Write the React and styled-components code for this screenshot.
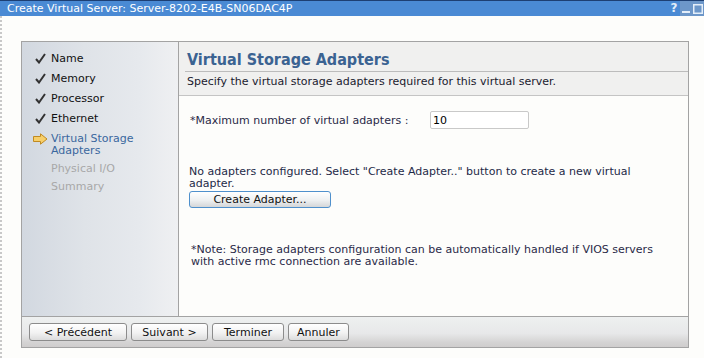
import React from 'react';
import styled, { createGlobalStyle } from 'styled-components';

const GlobalStyle = createGlobalStyle`
  html, body {
    margin: 0;
    padding: 0;
    background: #fdfdfb;
    font-family: 'DejaVu Sans', Verdana, sans-serif;
  }
`;

// Styles
const TitleBar = styled.div`
  height: 15px;
  border-top: 1px solid #1d3f73;
  background: #4a8ad4;
  color: #ffffff;
  font-size: 11px;
  line-height: 15px;
  padding-left: 7px;
  display: flex;
  justify-content: space-between;
  align-items: center;
`;

const TitleIcons = styled.div`
  display: flex;
  align-items: center;
  height: 15px;
`;

const TitleIcon = styled.span`
  width: ${(p) => p.$w || 11}px;
  height: 15px;
  display: flex;
  align-items: center;
  justify-content: center;
  color: #e4eef9;
  font-weight: bold;
  font-size: 12px;
  background: ${(p) => (p.$dark ? '#6d97c9' : 'transparent')};
`;

const Page = styled.div`
  border-left: 2px dotted #c8c8c8;
  padding: 25px 0 0 19px;
  height: 342px;
  box-sizing: border-box;
`;

const Wizard = styled.div`
  width: 668px;
  height: 307px;
  box-sizing: border-box;
  border: 1px solid #a3a3a3;
  display: flex;
  flex-direction: column;
`;

const Body = styled.div`
  flex: 1;
  display: flex;
`;

const Sidebar = styled.div`
  width: 156px;
  border-right: 1px solid #a3a3a3;
  background: linear-gradient(to right, #d2d8e0 0%, #dfe3e8 40%, #e6e9ed 75%, #eff0f2 100%);
  padding-top: 11px;
  display: flex;
  flex-direction: column;
`;

const Step = styled.div`
  display: flex;
  align-items: flex-start;
  font-size: 11px;
  line-height: 12px;
  margin-bottom: ${(p) => (p.$tight ? '6px' : '8px')};
  color: ${(p) => (p.$state === 'done' ? '#111111' : p.$state === 'current' ? '#3a679e' : '#a8a8a8')};
`;

const StepIcon = styled.span`
  width: 29px;
  flex-shrink: 0;
  display: flex;
  justify-content: center;
  padding-left: 7px;
  box-sizing: border-box;
`;

const Main = styled.div`
  flex: 1;
  display: flex;
  flex-direction: column;
  background: #fdfdfb;
`;

const Header = styled.div`
  background: #f0f0ef;
  border-bottom: 1px solid #c4c4c4;
  padding: 0 0 0 6px;
`;

const Heading = styled.h2`
  margin: 0;
  padding: 8px 0 2px 2px;
  font-family: 'DejaVu Sans Condensed', 'DejaVu Sans', sans-serif;
  font-stretch: condensed;
  font-size: 16px;
  line-height: 19px;
  font-weight: bold;
  color: #3b6392;
  border-bottom: 1px solid #bcbcbc;
`;

const Desc = styled.div`
  font-size: 11px;
  line-height: 13px;
  color: #1a1a2e;
  padding: 3px 0 7px 2px;
`;

const Content = styled.div`
  padding: 15px 0 0 10px;
  font-size: 11px;
  color: #2a2a48;
`;

const Field = styled.div`
  display: flex;
  align-items: center;
  padding-left: 1px;
`;

const Label = styled.span`
  width: 240px;
`;

const Input = styled.div`
  width: 99px;
  height: 18px;
  border: 1px solid #c9c9c9;
  border-radius: 2px;
  background: #ffffff;
  box-sizing: border-box;
  padding: 2px 0 0 2px;
  color: #000;
`;

const Message = styled.div`
  margin-top: 37px;
  line-height: 12px;
  width: 460px;
  color: #1e2a48;
`;

const CreateButton = styled.button`
  display: block;
  margin-top: 1px;
  width: 142px;
  height: 17px;
  border: 1px solid #4f90cc;
  border-radius: 3px;
  background: linear-gradient(to bottom, #ffffff 0%, #eef0f1 55%, #d4d6d8 100%);
  font-family: inherit;
  font-size: 11px;
  color: #111;
  padding: 0;
  line-height: 14px;
`;

const Note = styled.div`
  margin-top: 36px;
  padding-left: 2px;
  line-height: 12px;
  width: 480px;
`;

const Footer = styled.div`
  height: 31px;
  border-top: 1px solid #a3a3a3;
  background: linear-gradient(to bottom, #eef0f0 0%, #e7e8e9 55%, #d4d3d3 85%, #cfcdcd 100%);
  display: flex;
  align-items: flex-start;
  padding: 6px 0 0 7px;
  box-sizing: border-box;
  gap: 4px;
`;

const NavButton = styled.button`
  width: ${(p) => p.$w}px;
  height: 18px;
  border: 1px solid #8c8c8c;
  border-radius: 3px;
  background: linear-gradient(to bottom, #ffffff 0%, #f2f2f2 55%, #dcdcdc 100%);
  font-family: inherit;
  font-size: 11px;
  color: #111;
  padding: 0;
`;

const Check = () => (
  <svg width="11" height="11" viewBox="0 0 11 11">
    <path d="M1 6 L4 9.5 L10 1" stroke="#333" strokeWidth="2" fill="none" />
  </svg>
);

const Arrow = () => (
  <svg width="15" height="12" viewBox="0 0 15 12">
    <path
      d="M0.5 3.5 H7.5 V0.8 L14 6 L7.5 11.2 V8.5 H0.5 Z"
      fill="#f7cf6a"
      stroke="#c08a22"
      strokeWidth="1"
    />
  </svg>
);

const steps = [
  { label: 'Name', state: 'done' },
  { label: 'Memory', state: 'done' },
  { label: 'Processor', state: 'done' },
  { label: 'Ethernet', state: 'done' },
  { label: ['Virtual Storage', 'Adapters'], state: 'current' },
  { label: 'Physical I/O', state: 'todo' },
  { label: 'Summary', state: 'todo' },
];

const App = () => {
  return (
    <>
      <GlobalStyle />
      <TitleBar>
        <span>Create Virtual Server: Server-8202-E4B-SN06DAC4P</span>
        <TitleIcons>
          <TitleIcon $w={12}>?</TitleIcon>
          <TitleIcon $w={12} $dark>
            <svg width="8" height="10" viewBox="0 0 8 10">
              <rect x="0" y="7" width="8" height="2" fill="#e4eef9" />
            </svg>
          </TitleIcon>
          <TitleIcon $w={12} $dark>
            <svg width="10" height="10" viewBox="0 0 10 10">
              <rect x="0.75" y="0.75" width="8.5" height="8.5" fill="none" stroke="#e4eef9" strokeWidth="1.5" />
            </svg>
          </TitleIcon>
        </TitleIcons>
      </TitleBar>
      <Page>
        <Wizard>
          <Body>
            <Sidebar>
              {steps.map((s) => (
                <Step key={s.label} $state={s.state} $tight={s.state !== 'done'}>
                  <StepIcon>
                    {s.state === 'done' && <Check />}
                    {s.state === 'current' && <Arrow />}
                  </StepIcon>
                  <span>
                    {Array.isArray(s.label) ? (
                      <>
                        {s.label[0]}
                        <br />
                        {s.label[1]}
                      </>
                    ) : (
                      s.label
                    )}
                  </span>
                </Step>
              ))}
            </Sidebar>
            <Main>
              <Header>
                <Heading>Virtual Storage Adapters</Heading>
                <Desc>Specify the virtual storage adapters required for this virtual server.</Desc>
              </Header>
              <Content>
                <Field>
                  <Label>*Maximum number of virtual adapters :</Label>
                  <Input>10</Input>
                </Field>
                <Message>
                  No adapters configured. Select "Create Adapter.." button to create a new virtual
                  adapter.
                </Message>
                <CreateButton>Create Adapter...</CreateButton>
                <Note>
                  *Note: Storage adapters configuration can be automatically handled if VIOS servers
                  with active rmc connection are available.
                </Note>
              </Content>
            </Main>
          </Body>
          <Footer>
            <NavButton $w={98}>&lt; Précédent</NavButton>
            <NavButton $w={77}>Suivant &gt;</NavButton>
            <NavButton $w={72}>Terminer</NavButton>
            <NavButton $w={61}>Annuler</NavButton>
          </Footer>
        </Wizard>
      </Page>
    </>
  );
};

export default App;
